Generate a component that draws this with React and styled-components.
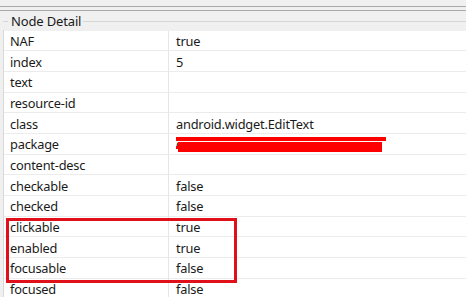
import React from "react";
import styled, { createGlobalStyle } from "styled-components";

const Global = createGlobalStyle`
  html, body { margin: 0; padding: 0; background: #ffffff; overflow: hidden; }
  body { font-family: "Noto Sans", "Open Sans", sans-serif; }
`;

const Page = styled.div`
  width: 466px;
  height: 297px;
  background: #f0f0f0;
  display: flex;
  flex-direction: column;
  overflow: hidden;
`;

const Rule = styled.div`
  height: 1px;
  background: ${(p) => p.$color || "#a9a9a9"};
  margin-top: ${(p) => p.$gap || 0}px;
  flex: none;
`;

const Group = styled.div`
  margin-top: 3px;
  display: flex;
  flex-direction: column;
  padding-left: 3px;
  flex: 1;
  min-height: 0;
`;

const LegendRow = styled.div`
  height: 17px;
  display: flex;
  align-items: center;
  margin-left: -3px;
  padding-left: 3px;
`;

const LegendLine = styled.div`
  height: 1px;
  background: #d5d5d5;
  width: ${(p) => (p.$w ? p.$w + "px" : "auto")};
  flex: ${(p) => (p.$w ? "none" : 1)};
  align-self: center;
  margin-top: -1px;
`;

const LegendText = styled.span`
  font-size: 13px;
  color: #1a1a1a;
  padding: 0 2px 0 3px;
  line-height: 17px;
  margin-top: -1px;
  letter-spacing: -0.15px;
`;

const Frame = styled.div`
  flex: 1;
  position: relative;
  border-left: 1px solid #d8d8d8;
  background: #f0f0f0;
  padding-top: 0.5px;
`;

const Table = styled.div`
  background: #ffffff;
  display: grid;
  grid-template-columns: 165px 1fr;
  grid-auto-rows: 20.7px;
`;

const Cell = styled.div`
  box-sizing: border-box;
  border-bottom: 1px solid #ececec;
  border-right: ${(p) => (p.$key ? "1px solid #e6e6e6" : "none")};
  padding-left: ${(p) => (p.$key ? 6 : 7)}px;
  padding-top: 1px;
  font-size: 12.8px;
  color: #1a1a1a;
  display: flex;
  align-items: center;
  white-space: nowrap;
  position: relative;
  letter-spacing: -0.2px;
`;

const Highlight = styled.div`
  position: absolute;
  left: 2px;
  top: 188px;
  width: 231px;
  height: 65px;
  box-sizing: border-box;
  border: 3px solid #e0101a;
  pointer-events: none;
`;

const Redaction = styled.svg`
  position: absolute;
  left: 7px;
  top: 0;
`;

const rows = [
  ["NAF", "true"],
  ["index", "5"],
  ["text", ""],
  ["resource-id", ""],
  ["class", "android.widget.EditText"],
  ["package", "redacted"],
  ["content-desc", ""],
  ["checkable", "false"],
  ["checked", "false"],
  ["clickable", "true"],
  ["enabled", "true"],
  ["focusable", "false"],
  ["focused", "false"],
];

export default function App() {
  return (
    <Page>
      <Global />
      <Rule $gap={6} />
      <Rule $gap={3} />
      <Group>
        <LegendRow>
          <LegendLine $w={5} />
          <LegendText>Node Detail</LegendText>
          <LegendLine />
        </LegendRow>
        <Frame>
          <Table>
            {rows.map(([k, v]) => (
              <React.Fragment key={k}>
                <Cell $key>{k}</Cell>
                <Cell>
                  {v === "redacted" ? (
                    <>
                      <span>c</span>
                      <Redaction width="212" height="21" viewBox="0 0 212 21">
                        <rect x="0" y="3" width="210" height="4" fill="#ff0000" />
                        <rect x="2" y="8" width="204" height="10" fill="#ff0000" />
                        <rect x="0" y="12" width="3" height="3" fill="#ff0000" />
                      </Redaction>
                    </>
                  ) : (
                    v
                  )}
                </Cell>
              </React.Fragment>
            ))}
          </Table>
          <Highlight />
        </Frame>
      </Group>
    </Page>
  );
}
